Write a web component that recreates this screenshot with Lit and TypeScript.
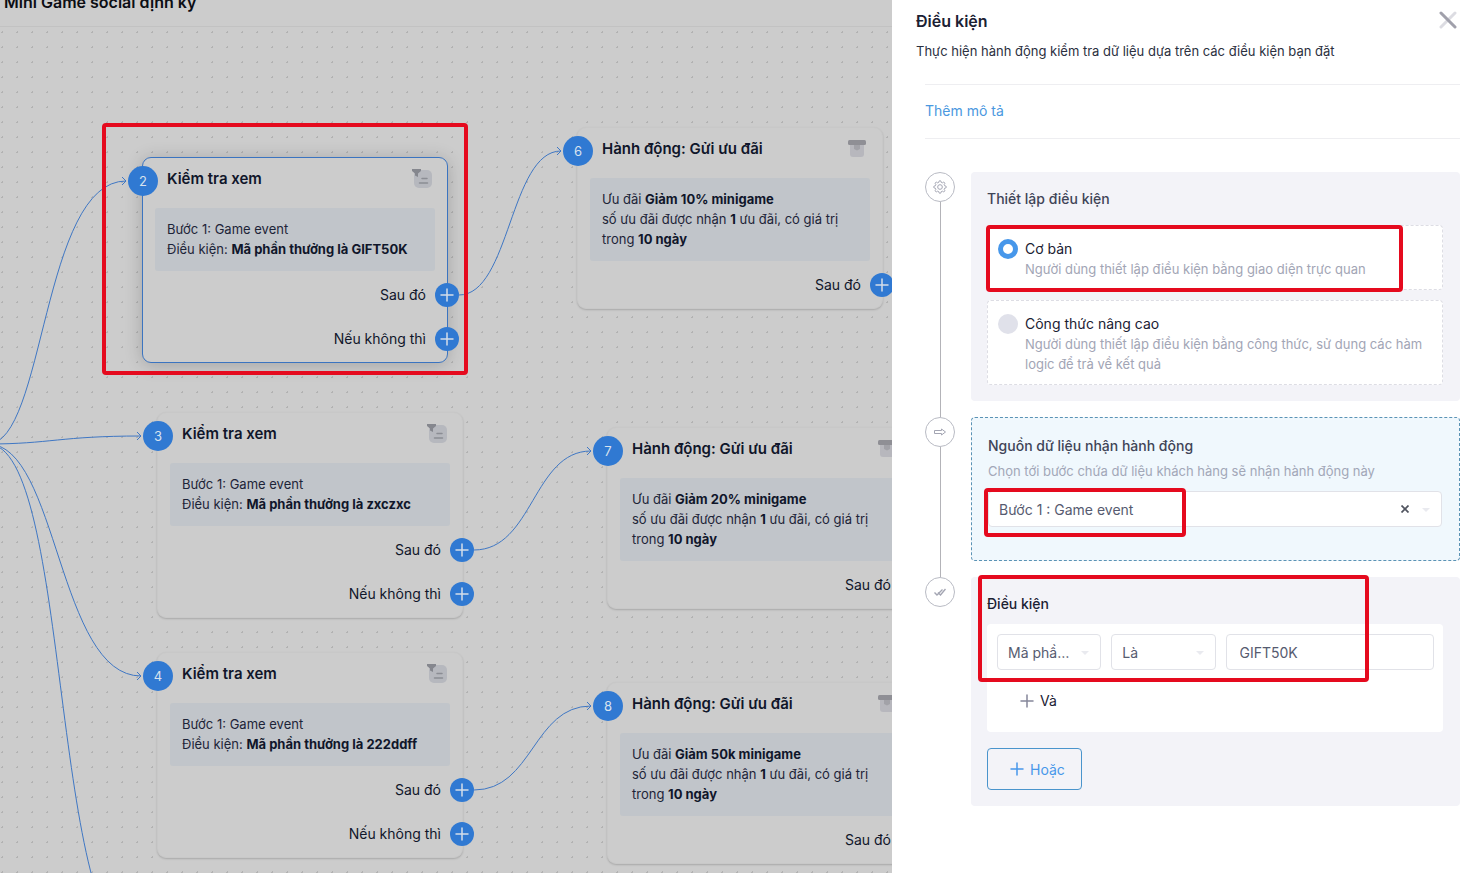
import { LitElement, html, svg, css, nothing } from "lit";
import { customElement, property, state } from "lit/decorators.js";
import { classMap } from "lit/directives/class-map.js";
import { styleMap } from "lit/directives/style-map.js";

interface FlowNode {
  id: number;
  kind: "check" | "gift";
  x: number;
  y: number;
  value: string;
  active?: boolean;
}

const NODES: FlowNode[] = [
  { id: 2, kind: "check", x: 142, y: 130, value: "GIFT50K", active: true },
  { id: 3, kind: "check", x: 157, y: 385, value: "zxczxc" },
  { id: 4, kind: "check", x: 157, y: 625, value: "222ddff" },
  { id: 6, kind: "gift", x: 577, y: 100, value: "10%" },
  { id: 7, kind: "gift", x: 607, y: 400, value: "20%" },
  { id: 8, kind: "gift", x: 607, y: 655, value: "50k" },
];

/* Each link runs from an output port to the badge of the next step:
   start x, start y, first bend x, second bend x, end x, end y. */
const LINKS = [
  [-12, 417, 45, 42, 126, 154],
  [-12, 417, 50, 60, 141, 409],
  [-12, 417, 58, 58, 141, 649],
  [-12, 417, 72, 50, 141, 923],
  [459, 268, 510, 510, 561, 124],
  [474, 523, 533, 533, 591, 424],
  [474, 763, 533, 533, 591, 679],
];

/* Outline of a cog with eight rounded teeth, centred on 12,12. */
const gearPath = (() => {
  const at = (r: number, deg: number) => {
    const a = (deg * Math.PI) / 180;
    return `${(12 + r * Math.cos(a)).toFixed(2)} ${(12 + r * Math.sin(a)).toFixed(2)}`;
  };
  let d = `M${at(8.2, -22)}`;
  for (let i = 0; i < 8; i++) {
    const c = i * 45;
    d += `L${at(8.2, c - 15)}Q${at(10.8, c - 13)} ${at(10.8, c)}Q${at(10.8, c + 13)} ${at(8.2, c + 15)}`;
  }
  return d + "Z";
})();

const plus = (size: number) => svg`
  <svg width=${size} height=${size} viewBox="0 0 14 14" fill="none" stroke="currentColor"
    stroke-width="1.5" stroke-linecap="round" aria-hidden="true">
    <path d="M7 1v12M1 7h12"></path>
  </svg>`;

const checkIcon = svg`
  <svg width="20" height="20" viewBox="0 0 20 20" aria-hidden="true">
    <rect x="2" y="1" width="18" height="18" rx="5" fill="#b6b8be"></rect>
    <path d="M0 0h9v2L6 4.500V8L3 6.500v-2L0 2z" fill="#85878e"></path>
    <path d="M10 9.500h5M7.500 14h8" stroke="#8b8d94" stroke-width="1.500" stroke-linecap="round"></path>
  </svg>`;

const giftIcon = svg`
  <svg width="20" height="20" viewBox="0 0 20 20" aria-hidden="true">
    <path d="M3 6h14v9a3 3 0 0 1-3 3H6a3 3 0 0 1-3-3z" fill="#b7b7bd"></path>
    <rect x="1" y="1" width="18" height="5" rx="1.500" fill="#8f8f95"></rect>
    <path d="M7 6h6v4l-3 1.500L7 10z" fill="#a2a2a8"></path>
  </svg>`;

@customElement("flow-node")
export class FlowNodeCard extends LitElement {
  @property({ attribute: false }) node!: FlowNode;

  static styles = css`
    * { box-sizing: border-box; }
    :host { display: block; width: 306px; }
    .card {
      position: relative;
      border: 1px solid #c8c8c8;
      border-radius: 9px;
      background: #cccccc;
      box-shadow: 0 1px 2px rgba(0, 0, 0, 0.18);
      padding: 11px 12px;
      color: #10162a;
    }
    .card.active {
      border-color: #3b74c0;
      box-shadow: 0 2px 18px rgba(0, 0, 0, 0.2);
    }
    .badge {
      position: absolute;
      left: -15px;
      top: 8px;
      width: 30px;
      height: 30px;
      border-radius: 50%;
      background: #3079d2;
      color: #d8e2ee;
      font-size: 13px;
      line-height: 30px;
      text-align: center;
    }
    .head {
      display: flex;
      align-items: flex-start;
      justify-content: space-between;
      padding: 0 3px 0 12px;
    }
    .title {
      margin: 0;
      font-size: 15px;
      line-height: 20px;
      font-weight: 600;
    }
    .body {
      margin: 19px 0 0;
      padding: 11px 12px 12px;
      border-radius: 3px;
      background: #c1c5ca;
      font-size: 13px;
      line-height: 20px;
      color: #1d2438;
    }
    .body b { color: #10162a; font-weight: 700; }
    .ports {
      display: flex;
      flex-direction: column;
      gap: 20px;
      margin: 12px -24px 0 0;
    }
    .port {
      display: flex;
      align-items: center;
      justify-content: flex-end;
      gap: 9px;
      font-size: 14px;
      line-height: 24px;
    }
    .add {
      display: grid;
      place-items: center;
      width: 24px;
      height: 24px;
      padding: 0;
      border: 0;
      border-radius: 50%;
      background: #3079d2;
      color: #d3dde9;
    }
  `;

  render() {
    const { id, kind, value, active } = this.node;
    const check = kind === "check";
    const ports = check ? ["Sau đó", "Nếu không thì"] : ["Sau đó"];
    return html`
      <article class=${classMap({ card: true, active: !!active })}>
        <span class="badge">${id}</span>
        <div class="head">
          <h2 class="title">${check ? "Kiểm tra xem" : "Hành động: Gửi ưu đãi"}</h2>
          ${check ? checkIcon : giftIcon}
        </div>
        <p class="body">
          ${check
            ? html`Bước 1: Game event<br />Điều kiện: <b>Mã phần thưởng là ${value}</b>`
            : html`Ưu đãi <b>Giảm ${value} minigame</b><br />số ưu đãi được nhận <b>1</b> ưu
                đãi, có giá trị trong <b>10 ngày</b>`}
        </p>
        <div class="ports">
          ${ports.map(
            (p) => html`<div class="port">
              <span>${p}</span>
              <button class="add" type="button" aria-label="Thêm bước: ${p}">${plus(14)}</button>
            </div>`
          )}
        </div>
      </article>
    `;
  }
}

@customElement("app-root")
export class AppRoot extends LitElement {
  @state() private mode = "basic";

  static styles = css`
    * { box-sizing: border-box; }
    :host {
      display: flex;
      height: 100vh;
      overflow: hidden;
      font-family: Inter, "Noto Sans", sans-serif;
      color: #1b2133;
      background: #ffffff;
    }
    button, input, select { font: inherit; color: inherit; }

    .workspace {
      flex: 1;
      min-width: 0;
      display: flex;
      flex-direction: column;
      overflow: hidden;
      background: #cccccc;
    }
    .topbar {
      flex: none;
      height: 27px;
      overflow: hidden;
      border-bottom: 1px solid #c2c2c2;
    }
    .topbar h1 {
      margin: -10px 4px 0;
      font-size: 16px;
      line-height: 24px;
      font-weight: 600;
      color: #0c0e14;
    }
    .canvas {
      flex: 1;
      position: relative;
      overflow: hidden;
      background-image: radial-gradient(circle, #b2b2b2 1px, transparent 1px);
      background-size: 15px 15px;
      background-position: -5px -2px;
    }
    .links { position: absolute; inset: 0; width: 100%; height: 100%; }
    .node { position: absolute; }
    .mark {
      position: absolute;
      border: 4px solid #e50a1e;
      border-radius: 4px;
      pointer-events: none;
    }
    .mark-node { left: 102px; top: 96px; width: 366px; height: 252px; }

    .panel {
      flex: none;
      width: 589px;
      overflow: hidden;
      background: #ffffff;
    }
    .intro {
      display: flex;
      justify-content: space-between;
      align-items: flex-start;
      padding: 9px 23px 0 24px;
    }
    .intro h2 { margin: 0; font-size: 16px; line-height: 24px; font-weight: 600; }
    .intro p { margin: 8px 0 0; font-size: 13px; line-height: 20px; color: #2b3040; }
    .close {
      display: grid;
      padding: 0;
      border: 0;
      background: none;
    }
    .content { padding: 23px 21px 24px 33px; }
    .describe {
      display: flex;
      padding: 15px 0 16px;
      border: solid #eeeef1;
      border-width: 1px 0;
      font-size: 14px;
      line-height: 22px;
    }
    .describe a { color: #4a98e0; text-decoration: none; }

    .steps { display: flex; flex-direction: column; margin-top: 33px; }
    .step { display: grid; grid-template-columns: 30px minmax(0, 1fr); column-gap: 16px; }
    .rail { display: flex; flex-direction: column; align-items: center; }
    .dot {
      display: grid;
      place-items: center;
      width: 30px;
      height: 30px;
      border: 1px solid #b9bbc4;
      border-radius: 50%;
      color: #a3a5b2;
    }
    .rail .line { flex: 1; width: 1px; background: #b3b3b8; }
    .block {
      position: relative;
      margin-bottom: 16px;
      padding: 16px 17px 16px 16px;
      border-radius: 4px;
      background: #f3f3f8;
    }
    .block.source {
      padding: 17px 17px 33px 16px;
      border: 1px dashed #5b93b5;
      background: #f0f8fd;
    }
    .block h3 {
      margin: 0;
      font-size: 14px;
      line-height: 22px;
      font-weight: 500;
      color: #3f4457;
    }
    .block h3.strong { color: #1b2133; }
    .mark-basic { left: 15px; top: 53px; width: 417px; height: 67px; }
    .mark-source { left: 12px; top: 70px; width: 202px; height: 49px; }
    .mark-rule { left: 7px; top: -2px; width: 391px; height: 107px; }

    .options { display: flex; flex-direction: column; gap: 10px; margin-top: 15px; }
    .option {
      display: flex;
      align-items: flex-start;
      gap: 7px;
      padding: 13px 16px 10px 10px;
      border: 1px dashed #dddde4;
      border-radius: 4px;
      background: #ffffff;
    }
    .option input {
      appearance: none;
      flex: none;
      width: 20px;
      height: 20px;
      margin: 0;
      border-radius: 50%;
      background: #e0e1ea;
    }
    .option input:checked { border: 5px solid #4797ea; background: #ffffff; }
    .option .name { display: block; font-size: 14px; line-height: 20px; }
    .option .hint { display: block; font-size: 13px; line-height: 20px; color: #a2a5b5; }

    .note { margin: 4px 0 0; font-size: 13px; line-height: 20px; color: #a2a7b8; }
    .picker { position: relative; display: flex; }
    .picker select, .value {
      appearance: none;
      width: 100%;
      height: 36px;
      padding: 0 26px 0 10px;
      border: 1px solid #e1e2e8;
      border-radius: 4px;
      background: #ffffff;
      font-size: 14px;
      color: #565b70;
      text-overflow: ellipsis;
      outline: none;
    }
    .source .picker { margin-top: 10px; }
    .picker .caret { position: absolute; right: 11px; top: 16px; }
    .clear {
      position: absolute;
      right: 30px;
      top: 11px;
      display: grid;
      place-items: center;
      width: 14px;
      height: 14px;
      padding: 0;
      border: 0;
      background: none;
      color: #50545f;
    }

    .group {
      margin-top: 9px;
      padding: 10px 9px 20px 10px;
      border-radius: 4px;
      background: #ffffff;
    }
    .rule { display: grid; grid-template-columns: 1fr 1fr 2fr; gap: 10px; }
    .value { padding: 0 13px; }
    .and {
      display: flex;
      align-items: center;
      gap: 6px;
      margin: 20px 0 0 23px;
      padding: 0;
      border: 0;
      background: none;
      font-size: 14px;
      line-height: 22px;
    }
    .and svg { color: #85879a; }
    .or {
      display: flex;
      align-items: center;
      gap: 6px;
      height: 42px;
      margin-top: 16px;
      padding: 0 16px 0 22px;
      border: 1px solid #4a94cc;
      border-radius: 4px;
      background: none;
      color: #4797ea;
      font-size: 14px;
    }
  `;

  private caret() {
    return html`<svg class="caret" width="10" height="6" viewBox="0 0 10 6" aria-hidden="true">
      <path d="M1 1h8L5 5z" fill="#e9eaef"></path>
    </svg>`;
  }

  private option(id: string, name: string, hint: string) {
    return html`<label class="option">
      <input
        type="radio"
        name="mode"
        .checked=${this.mode === id}
        @change=${() => (this.mode = id)}
      />
      <span><span class="name">${name}</span><span class="hint">${hint}</span></span>
    </label>`;
  }

  private rail(icon: unknown, last = false) {
    return html`<div class="rail">
      <span class="dot">${icon}</span>
      ${last ? nothing : html`<span class="line"></span>`}
    </div>`;
  }

  private links() {
    return html`<svg class="links" fill="none" stroke="#3f77c4" aria-hidden="true">
      ${LINKS.map(
        ([x1, y1, c1, c2, x2, y2]) => svg`
          <path d="M${x1} ${y1}C${c1} ${y1} ${c2} ${y2} ${x2} ${y2}"></path>
          <path d="M${x2 - 4} ${y2 - 4}l4 4l-4 4"></path>`
      )}
    </svg>`;
  }

  render() {
    return html`
      <main class="workspace">
        <header class="topbar"><h1>Mini Game social định kỳ</h1></header>
        <div class="canvas">
          ${this.links()}
          ${NODES.map(
            (n) => html`<flow-node
              class="node"
              .node=${n}
              style=${styleMap({ left: `${n.x}px`, top: `${n.y}px` })}
            ></flow-node>`
          )}
          <span class="mark mark-node"></span>
        </div>
      </main>

      <aside class="panel">
        <header class="intro">
          <div>
            <h2>Điều kiện</h2>
            <p>Thực hiện hành động kiểm tra dữ liệu dựa trên các điều kiện bạn đặt</p>
          </div>
          <button class="close" type="button" aria-label="Đóng">
            <svg width="20" height="20" viewBox="0 0 20 20" fill="none" stroke-width="3" stroke-linecap="round">
              <path d="M17 4L3 18" stroke="#dcdce2"></path>
              <path d="M3 4l14 14" stroke="#a0a0ab"></path>
            </svg>
          </button>
        </header>

        <div class="content">
          <div class="describe"><a href="#describe">Thêm mô tả</a></div>

          <div class="steps">
            <section class="step">
              ${this.rail(svg`
                <svg width="14" height="14" viewBox="0 0 24 24" fill="none" stroke="currentColor" stroke-width="1.700" aria-hidden="true">
                  <circle cx="12" cy="12" r="4"></circle>
                  <path stroke-linejoin="round" d=${gearPath}></path>
                </svg>`)}
              <div class="block">
                <h3>Thiết lập điều kiện</h3>
                <div class="options">
                  ${this.option("basic", "Cơ bản", "Người dùng thiết lập điều kiện bằng giao diện trực quan")}
                  ${this.option("formula", "Công thức nâng cao", "Người dùng thiết lập điều kiện bằng công thức, sử dụng các hàm logic để trả về kết quả")}
                </div>
                <span class="mark mark-basic"></span>
              </div>
            </section>

            <section class="step">
              ${this.rail(svg`
                <svg width="12" height="8" viewBox="0 0 12 8" fill="none" stroke="currentColor" stroke-linejoin="round" aria-hidden="true">
                  <path d="M.5 2.500h7V1L11.500 4 7.500 7v-1.500H.5z"></path>
                </svg>`)}
              <div class="block source">
                <h3 id="source-title">Nguồn dữ liệu nhận hành động</h3>
                <p class="note">Chọn tới bước chứa dữ liệu khách hàng sẽ nhận hành động này</p>
                <div class="picker">
                  <select aria-labelledby="source-title">
                    <option>Bước 1 : Game event</option>
                  </select>
                  <button class="clear" type="button" aria-label="Xóa">
                    <svg width="8" height="8" viewBox="0 0 8 8" fill="none" stroke="currentColor" stroke-width="1.700">
                      <path d="M.5.5l7 7M7.500.5l-7 7"></path>
                    </svg>
                  </button>
                  ${this.caret()}
                </div>
                <span class="mark mark-source"></span>
              </div>
            </section>

            <section class="step">
              ${this.rail(
                svg`<svg width="12" height="8" viewBox="0 0 12 8" fill="none" stroke="currentColor" stroke-width="1.400" aria-hidden="true">
                  <path d="M.5 4.500L3 7 8.500 1.500M4 4.500L6.500 7 11.500 1"></path>
                </svg>`,
                true
              )}
              <div class="block">
                <h3 class="strong">Điều kiện</h3>
                <div class="group">
                  <div class="rule">
                    <div class="picker">
                      <select aria-label="Thuộc tính"><option>Mã phần thưởng</option></select>
                      ${this.caret()}
                    </div>
                    <div class="picker">
                      <select aria-label="Phép so sánh"><option>Là</option></select>
                      ${this.caret()}
                    </div>
                    <input class="value" type="text" aria-label="Giá trị" value="GIFT50K" />
                  </div>
                  <button class="and" type="button">${plus(14)}<span>Và</span></button>
                </div>
                <button class="or" type="button">${plus(14)}<span>Hoặc</span></button>
                <span class="mark mark-rule"></span>
              </div>
            </section>
          </div>
        </div>
      </aside>
    `;
  }
}
